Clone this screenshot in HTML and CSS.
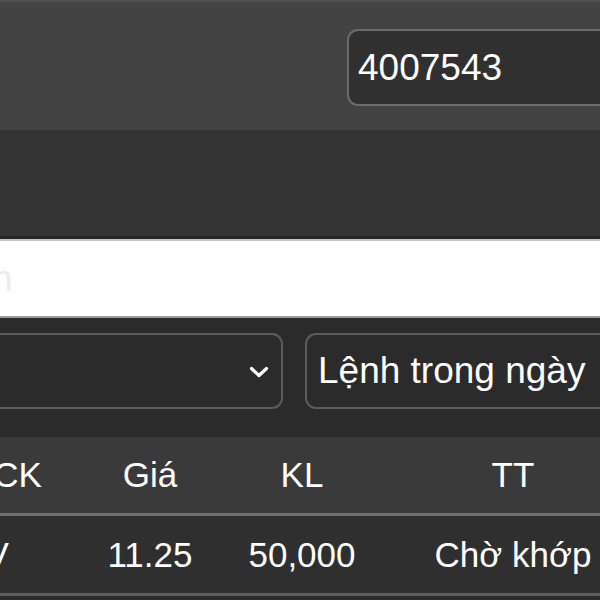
FILE: index.html
```html
<!DOCTYPE html>
<html lang="vi">
<head>
    <meta charset="UTF-8">
    <meta name="viewport" content="width=device-width, initial-scale=1.0">
    <title>Sổ lệnh</title>
    <link rel="stylesheet" href="styles.css">
</head>
<body>
    <div class="topbar">
        <input class="account-input" type="text" value="4007543">
    </div>

    <div class="tabs-band"></div>

    <div class="search-band">
        <span class="search-hint">h</span>
    </div>

    <div class="filter-row">
        <div class="select select-first">
            <span class="select-text"></span>
            <svg class="chevron" width="20" height="12" viewBox="0 0 20 12">
                <path d="M2.5 2.5 L10 9.5 L17.5 2.5" fill="none" stroke="#fff" stroke-width="3.2" stroke-linecap="round" stroke-linejoin="round"/>
            </svg>
        </div>
        <div class="select select-second">
            <span class="select-text">Lệnh trong ngày</span>
        </div>
    </div>

    <div class="order-table">
        <div class="table-row table-head">
            <div class="cell cell-symbol">Mã CK</div>
            <div class="cell">Giá</div>
            <div class="cell">KL</div>
            <div class="cell">TT</div>
        </div>
        <div class="table-row">
            <div class="cell cell-symbol">HHV</div>
            <div class="cell">11.25</div>
            <div class="cell">50,000</div>
            <div class="cell">Chờ khớp</div>
        </div>
    </div>
</body>
</html>
```

FILE: styles.css
```css
* {
    margin: 0;
    padding: 0;
    box-sizing: border-box;
}

body {
    width: 600px;
    height: 600px;
    overflow: hidden;
    background: #2b2b2b;
    color: #fff;
    font-family: "Liberation Sans", Arial, sans-serif;
}

.topbar {
    height: 130px;
    background: #434343;
    border-top: 2px solid #505050;
    padding: 27px 0 0 347px;
    display: flex;
    align-items: flex-start;
}

.account-input {
    flex-shrink: 0;
    width: 300px;
    height: 77px;
    padding: 0 0 0 9px;
    background: #303030;
    border: 2px solid #6c6c6c;
    border-radius: 11px;
    color: #fff;
    font-family: inherit;
    font-size: 37px;
    outline: none;
}

.tabs-band {
    height: 109px;
    background: #343434;
    border-bottom: 3px solid #262626;
}

.search-band {
    height: 79px;
    background: #fefefe;
    border-top: 2px solid #c4c4c4;
    border-bottom: 2px solid #9a9a9a;
    display: flex;
    align-items: center;
    overflow: hidden;
}

.search-hint {
    margin-left: -8px;
    font-size: 37px;
    color: #ececec;
}

.filter-row {
    display: grid;
    grid-template-columns: 283px 295px;
    gap: 22px;
    height: 119px;
    padding: 15px 0 0;
}

.select {
    height: 76px;
    background: #2b2b2b;
    border: 2px solid #5c5c5c;
    border-radius: 11px;
    display: flex;
    align-items: center;
    font-size: 37px;
}

.select-first {
    border-left: none;
    border-top-left-radius: 0;
    border-bottom-left-radius: 0;
    justify-content: flex-end;
    padding-right: 12px;
}

.select-second {
    border-right: none;
    border-top-right-radius: 0;
    border-bottom-right-radius: 0;
    padding-left: 11px;
}

.select-text {
    white-space: nowrap;
}

.chevron {
    display: block;
    margin-top: 2px;
}

.order-table {
    overflow: hidden;
}

.table-row {
    display: grid;
    grid-template-columns: 125px 180px 124px 298px;
    margin-left: -65px;
    height: 80px;
    background: #2f2f2f;
    border-bottom: 3px solid #5e5e5e;
    font-size: 35px;
}

.table-head {
    height: 79px;
    background: #3a3a3a;
    border-bottom-color: #6e6e6e;
}

.cell {
    display: flex;
    align-items: center;
    justify-content: center;
    white-space: nowrap;
}

.cell-symbol {
    justify-content: flex-start;
}
```
